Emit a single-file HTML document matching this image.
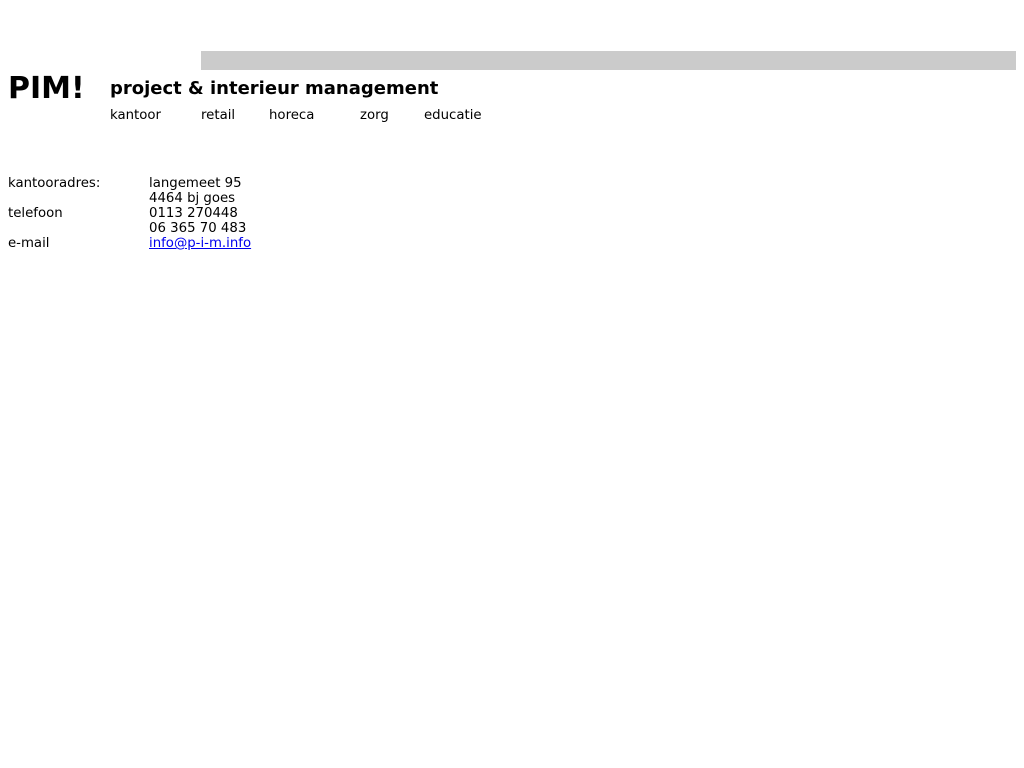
<!DOCTYPE html>
<html><head><meta charset="utf-8"><style>
body{margin:0;background:#fff;font-family:"DejaVu Sans","Liberation Sans",sans-serif;color:#000;font-size:13.3px}
.a{position:absolute;white-space:nowrap}
.bar{position:absolute;left:201px;top:51px;width:815px;height:19px;background:#cbcbcb}
.r{line-height:15px}
a{color:#00e}
</style></head><body>
<div class="bar"></div>
<div class="a" style="left:8px;top:72px;font-size:30px;font-weight:bold;line-height:34px">PIM!</div>
<div class="a" style="left:110px;top:79px;font-size:18px;font-weight:bold;line-height:20px">project &amp; interieur management</div>
<div class="a r" style="left:110px;top:108px">kantoor</div>
<div class="a r" style="left:201px;top:108px">retail</div>
<div class="a r" style="left:269px;top:108px">horeca</div>
<div class="a r" style="left:360px;top:108px">zorg</div>
<div class="a r" style="left:424px;top:108px">educatie</div>
<div class="a r" style="left:8px;top:176px">kantooradres:<br><br>telefoon<br><br>e-mail</div>
<div class="a r" style="left:149px;top:176px">langemeet 95<br>4464 bj goes<br>0113 270448<br>06 365 70 483<br><a href="#">info@p-i-m.info</a></div>
</body></html>
